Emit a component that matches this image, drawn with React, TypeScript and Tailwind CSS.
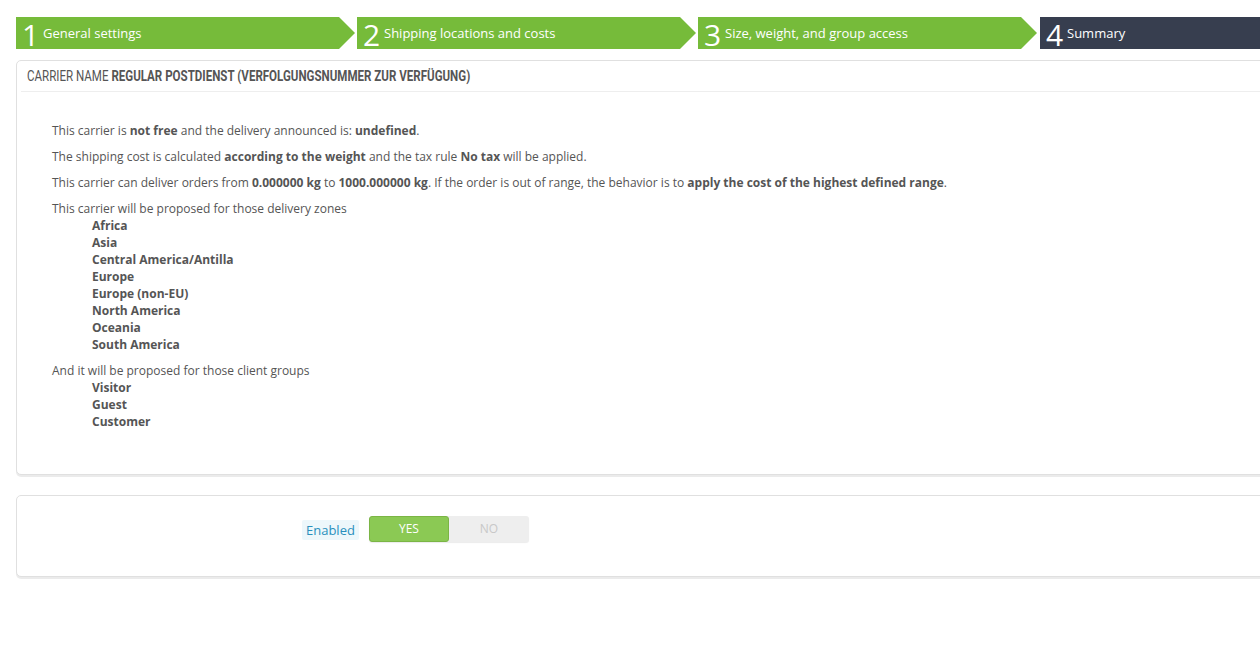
import React from "react";

const steps = [
  { n: "1", label: "General settings" },
  { n: "2", label: "Shipping locations and costs" },
  { n: "3", label: "Size, weight, and group access" },
  { n: "4", label: "Summary" },
];

const zones = [
  "Africa",
  "Asia",
  "Central America/Antilla",
  "Europe",
  "Europe (non-EU)",
  "North America",
  "Oceania",
  "South America",
];

const groups = ["Visitor", "Guest", "Customer"];

export default function App() {
  return (
    <div
      className="w-[1260px] h-[660px] overflow-hidden bg-white text-[#555]"
      style={{ fontFamily: '"Open Sans", "Liberation Sans", sans-serif' }}
    >
      <div className="w-[1380px] pl-4 pt-[17px]">
        {/* Wizard steps */}
        <div className="flex gap-[2px]">
          {steps.map((s, i) => {
            const last = i === steps.length - 1;
            return (
              <div
                key={s.n}
                className={
                  last
                    ? "w-[340px] h-[32px] flex items-center pl-[6px] bg-[#373e4f] text-white"
                    : "w-[339px] h-[32px] flex items-center pl-[6px] bg-[#76bb3a] text-white [clip-path:polygon(0_0,calc(100%-16px)_0,100%_50%,calc(100%-16px)_100%,0_100%)]"
                }
                style={last ? { marginLeft: 1 } : undefined}
              >
                <span className="text-[30px] leading-none font-normal mt-[3px] w-[21px]">{s.n}</span>
                <span className="text-[13px] leading-none">{s.label}</span>
              </div>
            );
          })}
        </div>

        {/* Summary panel */}
        <div className="mt-[11px] w-[1364px] border border-[#e0e0e0] rounded-[5px] bg-white shadow-[0_2px_0_rgba(0,0,0,0.08)] px-[4px] pb-[44px]">
          <div className="h-[31px] flex items-center px-[6px] border-b border-[#eee] text-[#555] overflow-hidden">
            <span
              className="inline-block origin-left scale-x-[0.77] whitespace-nowrap text-[15px] uppercase"
              style={{ fontFamily: '"Roboto", "Liberation Sans", sans-serif' }}
            >
              <span>Carrier name&nbsp;</span>
              <span className="font-bold">Regular Postdienst (Verfolgungsnummer zur Verfügung)</span>
            </span>
          </div>
          <div className="pl-[31px] pt-[30px] text-[12px] leading-[17px]">
            <p className="mb-[9px]">
              This carrier is <b>not free</b> and the delivery announced is: <b>undefined</b>.
            </p>
            <p className="mb-[9px]">
              The shipping cost is calculated <b>according to the weight</b> and the tax rule <b>No tax</b> will be applied.
            </p>
            <p className="mb-[9px]">
              This carrier can deliver orders from <b>0.000000 kg</b> to <b>1000.000000 kg</b>. If the order is out of range, the behavior is to <b>apply the cost of the highest defined range</b>.
            </p>
            <p>This carrier will be proposed for those delivery zones</p>
            <ul className="pl-[40px] mb-[9px]">
              {zones.map((z) => (
                <li key={z} className="font-bold">{z}</li>
              ))}
            </ul>
            <p>And it will be proposed for those client groups</p>
            <ul className="pl-[40px]">
              {groups.map((g) => (
                <li key={g} className="font-bold">{g}</li>
              ))}
            </ul>
          </div>
        </div>

        {/* Enabled panel */}
        <div className="mt-[20px] w-[1364px] h-[82px] border border-[#e0e0e0] rounded-[5px] bg-white shadow-[0_2px_0_rgba(0,0,0,0.08)] flex items-start pl-[285px] pt-[20px]">
          <span className="mt-[4px] text-[13px] leading-[20px] px-[4px] bg-[#edf7fb] text-[#2a8fbd] rounded-[2px]">Enabled</span>
          <div className="ml-[10px] flex h-[26px] w-[160px] rounded-[3px] bg-[#eee] shadow-[0_1px_1px_rgba(0,0,0,0.08)] text-[12px] uppercase">
            <div className="w-[80px] flex items-center justify-center rounded-[3px] bg-[#8bc954] border border-[#7bb545] text-white">Yes</div>
            <div className="w-[80px] flex items-center justify-center text-[#c8c8c8]">No</div>
          </div>
        </div>
      </div>
    </div>
  );
}
